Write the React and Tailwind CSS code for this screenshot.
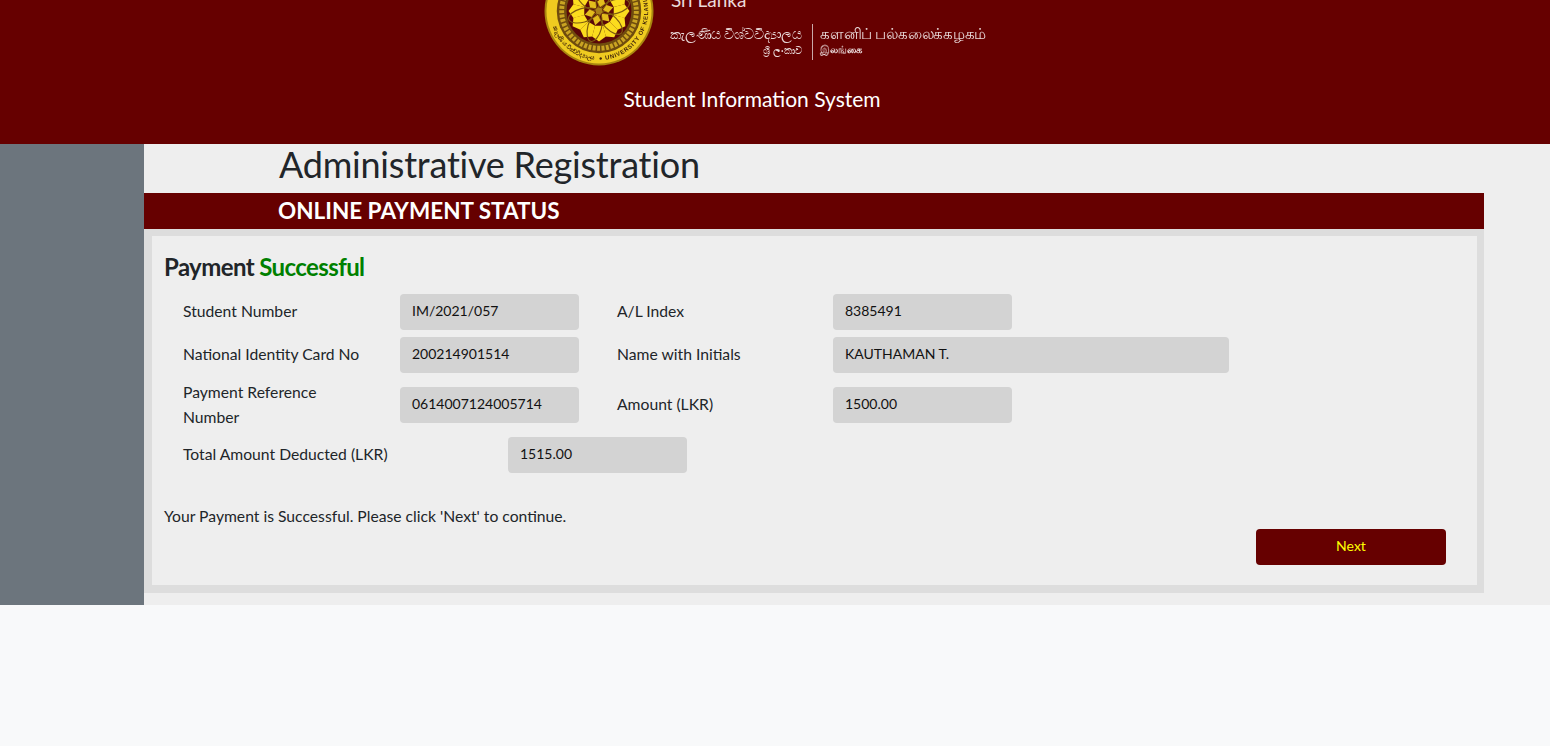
const font = { fontFamily: 'Lato, "Noto Sans", sans-serif' };

function Logo() {
    const outer = [0, 30, 60, 90, 120, 150, 180, 210, 240, 270, 300, 330];
    const inner = [15, 75, 135, 195, 255, 315];

    return (
        <svg width="110" height="110" viewBox="0 0 112 112" className="shrink-0 blur-[0.4px]">
            <defs>
                <path id="ringRight" d="M 56 106 A 50 50 0 0 0 106 56 A 50 50 0 0 0 56 6" />
                <path id="ringLeft" d="M 6 56 A 50 50 0 0 0 56 106" />
            </defs>
            <circle cx="56" cy="56" r="55.5" fill="#a8860f" />
            <circle cx="56" cy="56" r="53.5" fill="#efcb20" />
            <circle cx="56" cy="56" r="43" fill="#6f4c0e" />
            <circle cx="56" cy="56" r="38" fill="none" stroke="#c9a322" strokeWidth="5" strokeDasharray="3 1.5" />
            <circle cx="56" cy="56" r="33" fill="#5a0808" />
            {outer.map((a) => (
                <path
                    key={a}
                    d="M56 25 L63 30 L60 41 L52 41 L49 30 Z"
                    fill="#fbdc1e"
                    transform={`rotate(${a} 56 56)`}
                />
            ))}
            {inner.map((a) => (
                <ellipse
                    key={a}
                    cx="56"
                    cy="39"
                    rx="7"
                    ry="15"
                    fill="none"
                    stroke="#7d5a10"
                    strokeWidth="1.2"
                    transform={`rotate(${a} 56 56)`}
                />
            ))}
            {inner.map((a) => (
                <path
                    key={a}
                    d="M56 41 L60 47 L56 52 L52 47 Z"
                    fill="#e3bc1c"
                    transform={`rotate(${a} 56 56)`}
                />
            ))}
            <circle cx="56" cy="56" r="3.5" fill="#a9801a" />
            <g fontSize="6" fontWeight="700" fill="#43270a" style={{ fontFamily: '"Liberation Sans", sans-serif' }}>
                <text letterSpacing="0.7">
                    <textPath href="#ringRight">● UNIVERSITY OF KELANIYA</textPath>
                </text>
                <text>
                    <textPath href="#ringLeft" startOffset="94%" textAnchor="end">කැලණිය විශ්වවිද්‍යාලය</textPath>
                </text>
            </g>
        </svg>
    );
}

function Field({ value, className }) {
    return (
        <div className={`h-9 shrink-0 rounded bg-[#d3d3d3] pl-3 pb-[2px] flex items-center text-sm text-[#111] ${className}`}>
            {value}
        </div>
    );
}

function Label({ children, className }) {
    return (
        <div className={`shrink-0 text-[15.7px] leading-[25px] text-[#212529] ${className}`}>
            {children}
        </div>
    );
}

function App() {
    return (
        <div className="min-h-[746px] bg-[#f8f9fa] overflow-hidden" style={font}>

            <header className="h-[144px] bg-[#660000] overflow-hidden">
                <div className="flex ml-[544px] mt-[-45px] h-[111px]">
                    <div className="mt-[1px]">
                        <Logo />
                    </div>
                    <div className="ml-[17px] text-[#eadada]">
                        <div className="text-[19px] leading-[20px] mt-[35px] h-[22px]">Sri Lanka</div>
                        <div className="flex mt-[12px] blur-[0.3px]">
                            <div className="w-[131px] font-medium flex flex-col items-end">
                                <div className="text-[13.6px] tracking-[-0.2px] leading-[20px] whitespace-nowrap">කැලණිය විශ්වවිද්‍යාලය</div>
                                <div className="text-[10px] leading-[12px]">ශ්‍රී ලංකාව</div>
                            </div>
                            <div className="w-px h-[36px] bg-[#c9a9a9] ml-[10px] mr-[7px]"></div>
                            <div className="w-[170px]">
                                <div className="text-[14.6px] tracking-[-0.25px] leading-[20px] whitespace-nowrap font-medium">களனிப் பல்கலைக்கழகம்</div>
                                <div className="text-[10px] leading-[10px] font-bold">இலங்கை</div>
                            </div>
                        </div>
                    </div>
                </div>
                <div className="text-center text-[21px] text-white mr-[46px] mt-[19px] leading-[28px]">
                    Student Information System
                </div>
            </header>

            <div className="flex h-[461px]">

                <aside className="w-[144px] shrink-0 bg-[#6c757d]"></aside>

                <main className="flex-1 bg-[#eeeeee]">

                    <h1 className="h-[49px] pl-[135px] text-4xl tracking-[-0.22px] leading-[41px] text-[#212529]">
                        Administrative Registration
                    </h1>

                    <div className="w-[1340px]">
                        <div className="h-9 bg-[#660000] pl-[134px] text-[22.5px] font-bold leading-9 text-white">
                            ONLINE PAYMENT STATUS
                        </div>

                        <div className="bg-[#dddddd] pt-[7px] pb-2 pl-2 pr-[7px]">
                            <div className="h-[349px] bg-[#eeeeee] pl-3 pt-[16px] text-[#212529]">

                                <h4 className="text-2xl font-bold tracking-[-0.6px] leading-[30px] mb-[12px]">
                                    Payment <span className="text-[#008000]">Successful</span>
                                </h4>

                                <div className="pl-[19px] flex flex-col">
                                    <div className="flex items-center h-9">
                                        <Label className="w-[217px] pb-[2px]">Student Number</Label>
                                        <Field value="IM/2021/057" className="w-[179px]" />
                                        <Label className="w-[216px] ml-[38px] pb-[2px]">A/L Index</Label>
                                        <Field value="8385491" className="w-[179px]" />
                                    </div>
                                    <div className="flex items-center h-9 mt-[7px]">
                                        <Label className="w-[217px] pb-[2px]">National Identity Card No</Label>
                                        <Field value="200214901514" className="w-[179px]" />
                                        <Label className="w-[216px] ml-[38px] pb-[2px]">Name with Initials</Label>
                                        <Field value="KAUTHAMAN T." className="w-[396px]" />
                                    </div>
                                    <div className="flex items-center h-9 mt-[14px]">
                                        <Label className="w-[217px] pr-[60px]">Payment Reference Number</Label>
                                        <Field value="0614007124005714" className="w-[179px]" />
                                        <Label className="w-[216px] ml-[38px] pb-[2px]">Amount (LKR)</Label>
                                        <Field value="1500.00" className="w-[179px]" />
                                    </div>
                                    <div className="flex items-center h-9 mt-[14px]">
                                        <Label className="w-[325px] pb-[2px]">Total Amount Deducted (LKR)</Label>
                                        <Field value="1515.00" className="w-[179px]" />
                                    </div>
                                </div>

                                <p className="text-[15.7px] leading-[20px] mt-[33px]">
                                    Your Payment is Successful. Please click 'Next' to continue.
                                </p>

                                <div className="flex justify-end pr-[31px] mt-[3px]">
                                    <button className="w-[190px] h-9 rounded bg-[#660000] pb-[2px] text-sm text-[#ffff00]">
                                        Next
                                    </button>
                                </div>

                            </div>
                        </div>
                    </div>

                </main>

            </div>

        </div>
    );
}

export default App;
